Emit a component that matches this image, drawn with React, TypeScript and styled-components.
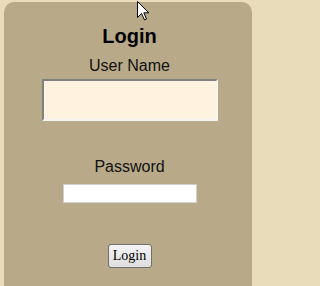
import styled, { createGlobalStyle } from 'styled-components';

const GlobalStyle = createGlobalStyle`
  html, body {
    margin: 0;
    padding: 0;
    background: #e8dcba;
    overflow: hidden;
  }
  body {
    font-family: "Liberation Sans", Arial, sans-serif;
  }
`;

const Page = styled.div`
  position: relative;
  width: 256px;
  height: 286px;
  padding: 2px 4px 0 4px;
  box-sizing: border-box;
  overflow: hidden;
`;

const Panel = styled.form`
  display: flex;
  flex-direction: column;
  align-items: center;
  width: 248px;
  height: 284px;
  margin: 0;
  padding: 23px 0 0 3px;
  box-sizing: border-box;
  background: #b8aa88;
  border-radius: 10px 10px 0 0;
`;

const Title = styled.h1`
  margin: 0 0 9px;
  font-size: 20px;
  line-height: 23px;
  font-weight: bold;
  color: #000;
`;

const Label = styled.label<{ $gap: number; $top?: number }>`
  display: block;
  margin: ${({ $top }) => $top ?? 0}px 0 ${({ $gap }) => $gap}px;
  font-size: 16px;
  line-height: 18px;
  color: #111;
`;

const NameInput = styled.input`
  width: 176px;
  height: 42px;
  box-sizing: border-box;
  margin: 0;
  padding: 2px 4px;
  background: #fff2de;
  border-style: solid;
  border-width: 2px;
  border-color: #808080 #f4f4f4 #f4f4f4 #808080;
  font: 16px "Liberation Sans", Arial, sans-serif;
  outline: none;
`;

const PasswordInput = styled.input`
  width: 134px;
  height: 19px;
  box-sizing: border-box;
  margin: 0;
  padding: 1px 3px;
  background: #fff;
  border: 1px solid #cfcfcf;
  font: 13px "Liberation Sans", Arial, sans-serif;
  outline: none;
`;

const Button = styled.button`
  width: 44px;
  height: 24px;
  margin-top: 41px;
  padding: 0;
  box-sizing: border-box;
  border: 1px solid #707070;
  border-radius: 3px;
  background: linear-gradient(#f4f4f4, #dedede);
  color: #000;
  font: 14px "Liberation Serif", "Times New Roman", serif;
  cursor: pointer;
`;

const Cursor = styled.svg`
  position: absolute;
  left: 137px;
  top: 1px;
`;

export default function App() {
  return (
    <>
      <GlobalStyle />
      <Page>
        <Panel onSubmit={e => e.preventDefault()}>
          <Title>Login</Title>
          <Label htmlFor="user" $gap={4}>User Name</Label>
          <NameInput id="user" type="text" />
          <Label htmlFor="pass" $top={37} $gap={8}>Password</Label>
          <PasswordInput id="pass" type="password" />
          <Button type="submit">Login</Button>
        </Panel>
        <Cursor width="13" height="20" viewBox="0 0 13 20">
          <path
            d="M0.5 0.5 L0.5 16.5 L4.5 12.5 L7.5 19 L9.5 18 L6.8 11.8 L11.8 11.8 Z"
            fill="#fff"
            stroke="#000"
            strokeWidth="1"
            strokeLinejoin="miter"
          />
        </Cursor>
      </Page>
    </>
  );
}
